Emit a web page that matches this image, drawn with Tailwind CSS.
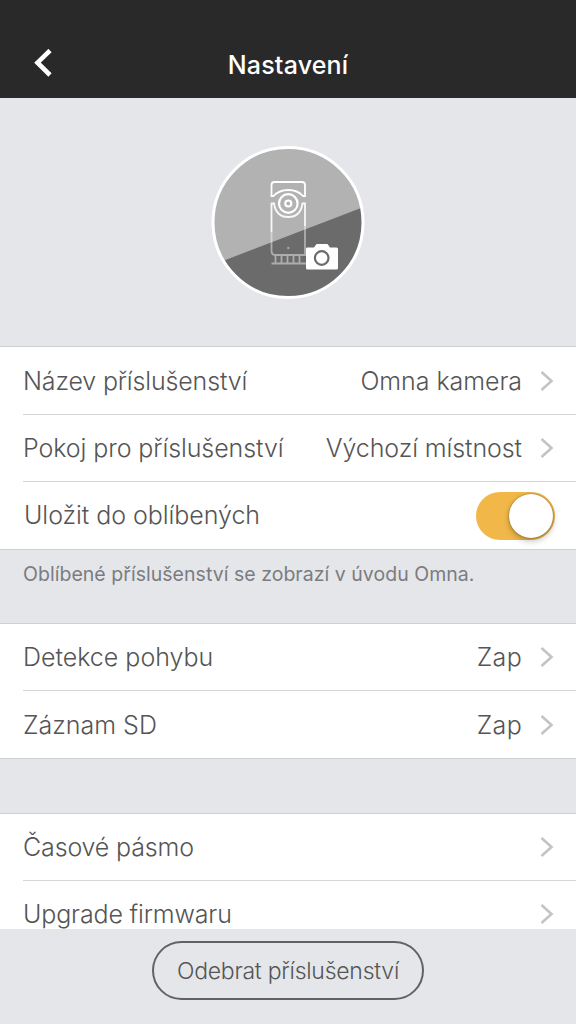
<!DOCTYPE html>
<html lang="cs">
<head>
<meta charset="utf-8">
<title>Nastavení</title>
<script src="https://cdn.jsdelivr.net/npm/@tailwindcss/browser@4"></script>
</head>
<body class="w-[576px] h-[1024px] overflow-hidden flex flex-col bg-[#e4e6ea] font-['Inter',sans-serif] font-light text-[25px] leading-[30px] text-[#555555]">
<svg class="hidden"><symbol id="chev" viewBox="0 0 14 20"><path d="M1.5 1 L11.5 10 L1.5 19" fill="none" stroke="#c4c4c6" stroke-width="2.6"/></symbol></svg>
<header class="h-[98px] shrink-0 bg-[#292929] grid grid-cols-[1fr_auto_1fr] pt-[48px]">
  <svg class="w-[18px] h-[28px] ml-[34px] mt-px" viewBox="0 0 18 28"><path d="M16 1.5 L3.5 13.7 L16 26" fill="none" stroke="#fff" stroke-width="4.6"/></svg>
  <h1 class="text-[25px] leading-[34px] font-medium text-white whitespace-nowrap tracking-[0.2px]"><span>Nastavení</span></h1>
</header>
<section class="h-[248px] shrink-0 flex justify-center pt-[48px]">
  <svg class="w-[154px] h-[154px]" viewBox="0 0 154 154">
    <defs><clipPath id="disc"><circle cx="77" cy="76.500" r="75"/></clipPath></defs>
    <g clip-path="url(#disc)"><path fill="#b2b2b2" d="M0 0H154V154H0z"/><path fill="#6b6b6b" d="M0 119.500 L154 60.500 V154 H0z"/></g>
    <circle cx="77" cy="76.500" r="75" fill="none" stroke="#fff" stroke-width="3"/>
    <g fill="none" stroke="#fff" stroke-width="1.800">
      <path d="M60.500 50 V39 Q60.500 36 63.500 36 H91 Q94 36 94 39 V50 H92 Q86.500 44 77.300 44 Q68 44 62.500 50z"/>
      <circle cx="77.300" cy="57.500" r="9.300" stroke-width="2.200"/>
      <circle cx="77.300" cy="57.500" r="3" stroke-width="2.200"/>
      <path opacity=".9" d="M60.500 86 V57.500 H63 Q65 71 77.300 71 Q89.500 71 91.500 57.500 H94 V80"/>
      <path opacity=".45" d="M60.500 86 V105 Q60.500 109 64.500 109 H94 V80 M60.500 117.500 H95 M64.500 109V117 M70.500 109V117 M76.500 109V117 M82.500 109V117 M88.500 109V117"/>
    </g>
    <circle cx="77.300" cy="102" r="1.200" fill="#a5a5a5"/>
    <path fill="#fff" d="M96 101.500 H103 L105.500 98 H116.500 L119 101.500 H125.500 Q127 101.500 127 103 V122 Q127 123.500 125.500 123.500 H96.500 Q95 123.500 95 122 V103 Q95 101.500 96 101.500z"/>
    <circle cx="110.700" cy="112" r="6.800" fill="#fff" stroke="#6b6b6b" stroke-width="2.200"/>
  </svg>
</section>
<main class="h-[583px] shrink-0 overflow-hidden">
  <div class="bg-white border-y border-[#cfd0d3] pl-[23px]">
    <div class="h-[68px] border-b border-[#d6d6d8] flex items-center pr-[22px]"><span class="tracking-[-0.16px]">Název příslušenství</span><span class="ml-auto mr-[18px] tracking-[-0.06px]">Omna kamera</span><svg class="w-[14px] h-5"><use href="#chev"/></svg></div>
    <div class="h-[67px] border-b border-[#d6d6d8] flex items-center pr-[22px]"><span class="tracking-[-0.09px]">Pokoj pro příslušenství</span><span class="ml-auto mr-[18px] tracking-[-0.09px]">Výchozí místnost</span><svg class="w-[14px] h-5"><use href="#chev"/></svg></div>
    <div class="h-[67px] flex items-center pr-[21px]"><span class="pl-px pb-px tracking-[-0.05px]">Uložit do oblíbených</span>
      <div class="ml-auto w-[79px] h-[48px] rounded-full bg-[#f1b849] flex items-center justify-end pr-[2px]"><div class="size-[44px] rounded-full bg-white shadow-[0_3px_6px_rgba(0,0,0,0.25),0_0_2px_rgba(70,50,0,0.6)]"></div></div></div>
  </div>
  <p class="h-[73px] pl-[23px] pt-[9px] text-[19.5px] font-normal text-[#7b7c80] tracking-[0.03px]"><span>Oblíbené příslušenství se zobrazí v úvodu Omna.</span></p>
  <div class="bg-white border-y border-[#cfd0d3] pl-[23px]">
    <div class="h-[67px] border-b border-[#d6d6d8] flex items-center pr-[22px]"><span>Detekce pohybu</span><span class="ml-auto mr-[18px] tracking-[0.3px]">Zap</span><svg class="w-[14px] h-5"><use href="#chev"/></svg></div>
    <div class="h-[67px] flex items-center pr-[22px]"><span>Záznam SD</span><span class="ml-auto mr-[18px] tracking-[0.3px]">Zap</span><svg class="w-[14px] h-5"><use href="#chev"/></svg></div>
  </div>
  <div class="bg-white border-t border-[#cfd0d3] pl-[23px] mt-[54px]">
    <div class="h-[67px] border-b border-[#d6d6d8] flex items-center pr-[22px]"><span class="tracking-[-0.15px]">Časové pásmo</span><svg class="ml-auto w-[14px] h-5"><use href="#chev"/></svg></div>
    <div class="h-[66px] flex items-center pr-[22px]"><span class="tracking-[-0.15px]">Upgrade firmwaru</span><svg class="ml-auto w-[14px] h-5"><use href="#chev"/></svg></div>
  </div>
</main>
<footer class="h-[95px] shrink-0 flex justify-center pt-3">
  <button class="w-[272px] h-[59px] rounded-full border-2 border-[#626266] flex items-center justify-center text-[23px] whitespace-nowrap tracking-[-0.25px]"><span>Odebrat příslušenství</span></button>
</footer>
</body>
</html>
